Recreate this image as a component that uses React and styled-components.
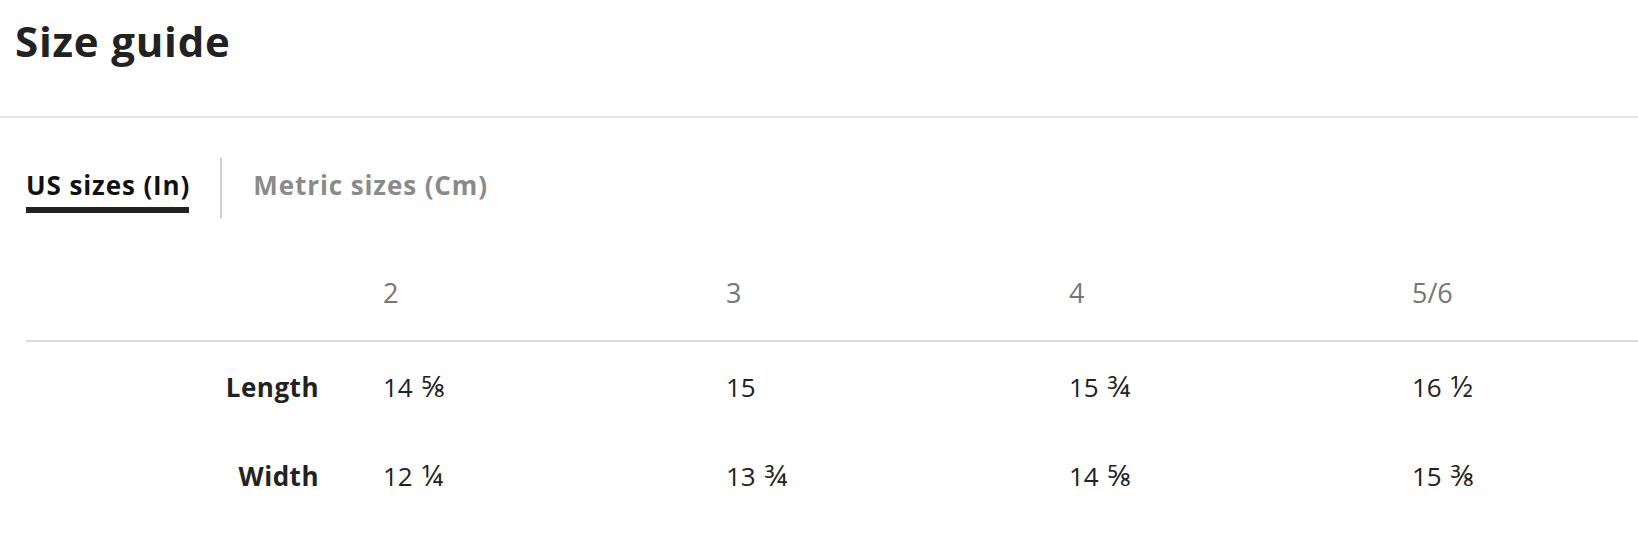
import React, { useState } from 'react';
import styled, { createGlobalStyle } from 'styled-components';

const GlobalStyle = createGlobalStyle`
  body {
    margin: 0;
    background: #fff;
    font-family: "Open Sans", "Noto Sans", "DejaVu Sans", sans-serif;
    color: #222;
  }
`;

const Page = styled.div`
  width: 100%;
  overflow: hidden;
`;

const Header = styled.header`
  padding: 16px 15px 50px;
  border-bottom: 2px solid #e5e5e5;
`;

const Title = styled.h1`
  margin: 0;
  font-size: 42px;
  line-height: 50px;
  font-weight: 700;
  letter-spacing: 0.8px;
  color: #222;
`;

const Body = styled.div`
  padding: 40px 0 0 26px;
`;

const Tabs = styled.div`
  display: flex;
  align-items: stretch;
  height: 60px;
`;

const Tab = styled.button`
  appearance: none;
  background: none;
  border: none;
  padding: 11px 0 5px;
  margin: 0;
  font-family: inherit;
  font-size: 26px;
  line-height: 32px;
  font-weight: 700;
  letter-spacing: 0.9px;
  color: ${p => (p.$active ? '#111' : '#8a8a8a')};
  cursor: pointer;
  display: flex;
  flex-direction: column;
  align-items: stretch;
  gap: 6px;

  &::after {
    content: '';
    height: 6px;
    margin-right: 1px;
    background: ${p => (p.$active ? '#222' : 'transparent')};
  }
`;

const TabDivider = styled.span`
  width: 2px;
  background: #d0d0d0;
  margin: 0 31px 0 30px;
`;

const Table = styled.div`
  margin-top: 58px;
  display: grid;
  grid-template-columns: 357px repeat(4, 343px);
  width: max-content;
`;

const HeadCell = styled.div`
  padding: 0 0 30px;
  font-size: 27px;
  line-height: 34px;
  color: #767676;
  border-bottom: 2px solid #dcdcdc;
`;

const LabelCell = styled.div`
  padding: 29px 64px 28px 0;
  text-align: right;
  font-size: 26px;
  line-height: 32px;
  font-weight: 700;
  letter-spacing: 0.5px;
  color: #222;
`;

const ValueCell = styled.div`
  padding: 29px 0 28px;
  font-size: 26px;
  line-height: 32px;
  color: #222;
`;

const Frac = styled.span`
  font-size: 1.12em;
  line-height: 0;
  margin-left: 2px;
`;

const sizes = ['2', '3', '4', '5/6'];

const data = {
  us: [
    { label: 'Length', values: [['14', '⅝'], ['15'], ['15', '¾'], ['16', '½']] },
    { label: 'Width', values: [['12', '¼'], ['13', '¾'], ['14', '⅝'], ['15', '⅜']] },
  ],
  metric: [
    { label: 'Length', values: [['37'], ['38'], ['40'], ['42']] },
    { label: 'Width', values: [['31'], ['35'], ['37'], ['39']] },
  ],
};

export default function App() {
  const [unit, setUnit] = useState('us');

  return (
    <>
      <GlobalStyle />
      <Page>
        <Header>
          <Title>Size guide</Title>
        </Header>
        <Body>
          <Tabs>
            <Tab $active={unit === 'us'} onClick={() => setUnit('us')}>US sizes (In)</Tab>
            <TabDivider />
            <Tab $active={unit === 'metric'} onClick={() => setUnit('metric')}>Metric sizes (Cm)</Tab>
          </Tabs>
          <Table>
            <HeadCell />
            {sizes.map(s => (
              <HeadCell key={s}>{s}</HeadCell>
            ))}
            {data[unit].map(row => (
              <React.Fragment key={row.label}>
                <LabelCell>{row.label}</LabelCell>
                {row.values.map(([whole, frac], i) => (
                  <ValueCell key={i}>
                    {whole}
                    {frac && <> <Frac>{frac}</Frac></>}
                  </ValueCell>
                ))}
              </React.Fragment>
            ))}
          </Table>
        </Body>
      </Page>
    </>
  );
}
